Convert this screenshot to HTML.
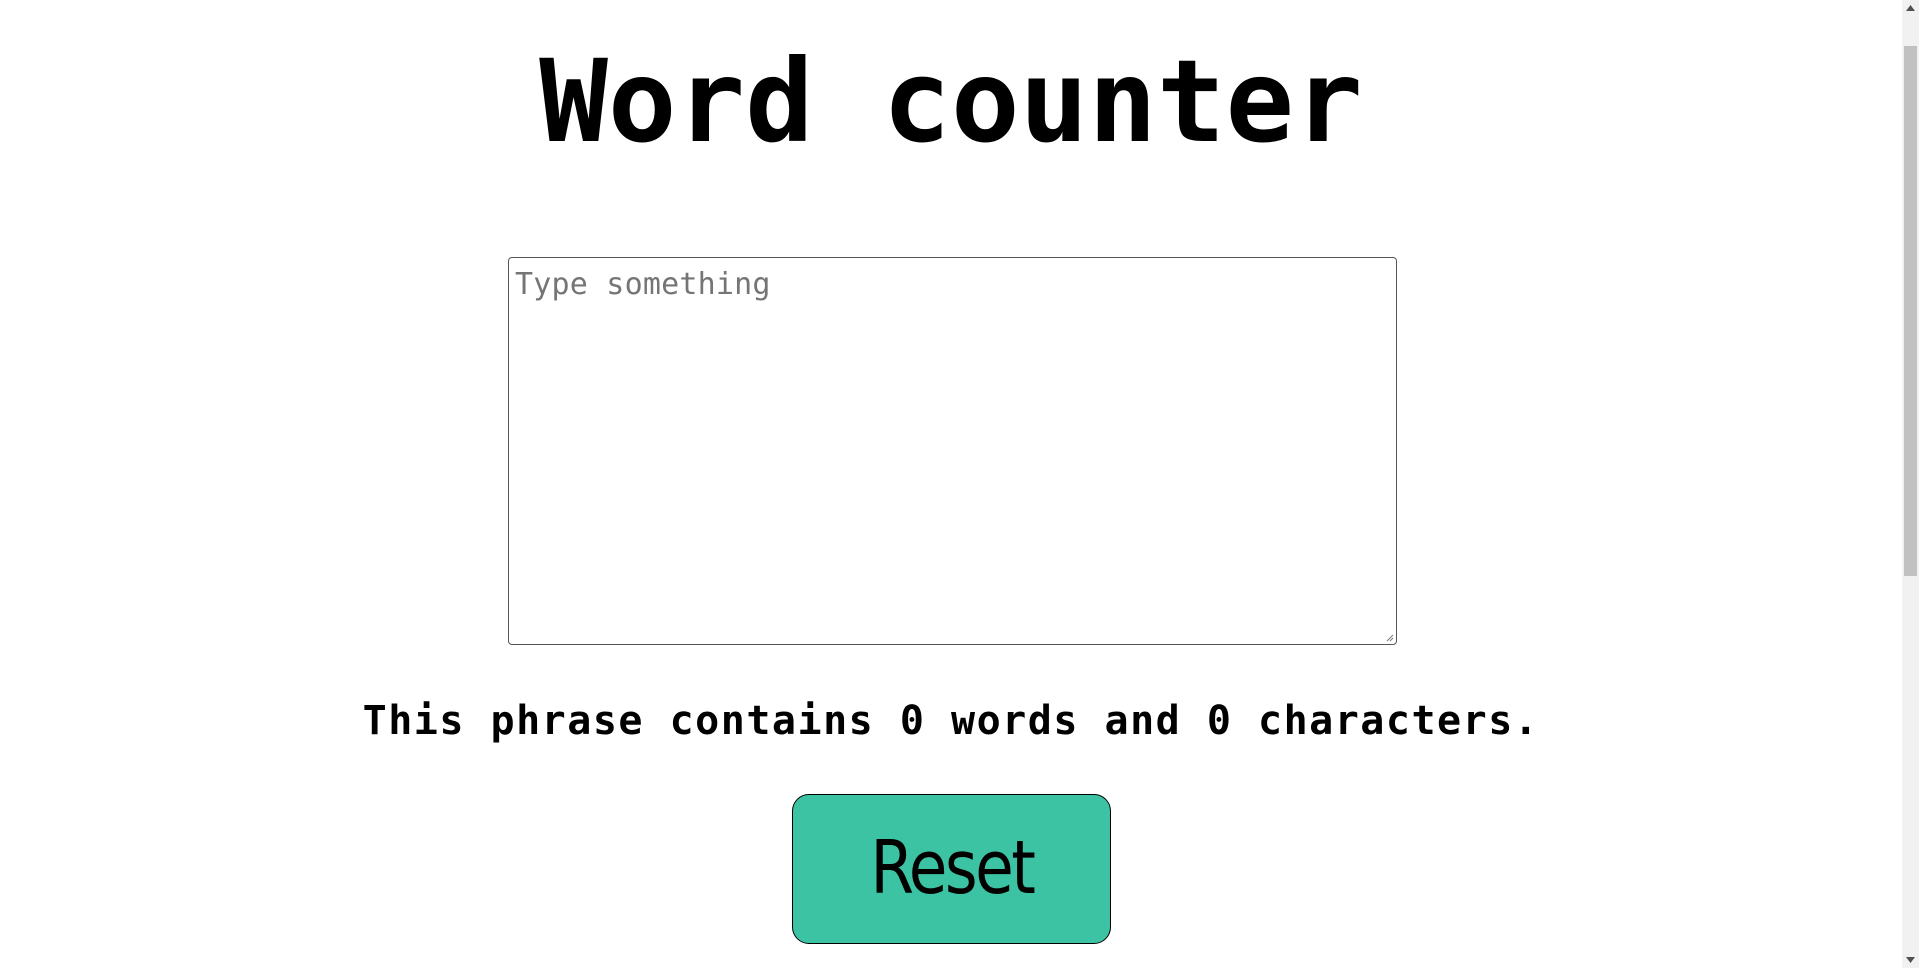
<!DOCTYPE html>
<html><head><style>
html,body{margin:0;padding:0;width:1919px;height:968px;overflow:hidden;background:#fff;}
.page{position:absolute;left:0;top:0;width:1902px;height:968px;}
h1{position:absolute;left:0;width:1902px;top:32px;margin:0;text-align:center;font:bold 114px/140px "DejaVu Sans Mono","Liberation Mono",monospace;letter-spacing:0px;color:#000;}
.ta{position:absolute;left:508px;top:257px;width:887px;height:386px;border:1px solid #555;border-radius:4px;}
.ph{position:absolute;left:6px;top:9px;font:30px "DejaVu Sans Mono","Liberation Mono",monospace;letter-spacing:0.2px;color:#757575;}
.grip{position:absolute;right:2px;bottom:2px;width:8px;height:8px;}
.info{position:absolute;left:0;width:1902px;top:698px;text-align:center;font:bold 40px "DejaVu Sans Mono","Liberation Mono",monospace;letter-spacing:1.5px;color:#000;}
.btn{position:absolute;left:792px;top:794px;width:317px;height:148px;border:1px solid #000;border-radius:17px;background:#3bc3a3;text-align:center;font:74px/146px "DejaVu Sans","Liberation Sans",sans-serif;letter-spacing:-3px;color:#000;}
.sb{position:absolute;left:1902px;top:0;width:17px;height:968px;background:#f1f1f1;}
.thumb{position:absolute;left:2px;top:46px;width:13px;height:530px;background:#c1c1c1;}
</style></head><body>
<div class="page">
<h1>Word counter</h1>
<div class="ta"><div class="ph">Type something</div>
<svg class="grip" viewBox="0 0 8 8"><path d="M7 1L1 7M7 4L4 7" stroke="#777" stroke-width="1"/></svg></div>
<div class="info">This phrase contains 0 words and 0 characters.</div>
<div class="btn"><span style="display:inline-block;transform:scaleX(0.85)">Reset</span></div>
</div>
<div class="sb"><div class="thumb"></div>
<svg style="position:absolute;left:4px;top:5px" width="9" height="6"><path d="M0 6L4.5 0L9 6Z" fill="#505050"/></svg>
<svg style="position:absolute;left:4px;top:957px" width="9" height="6"><path d="M0 0L4.5 6L9 0Z" fill="#505050"/></svg>
</div>
</body></html>
